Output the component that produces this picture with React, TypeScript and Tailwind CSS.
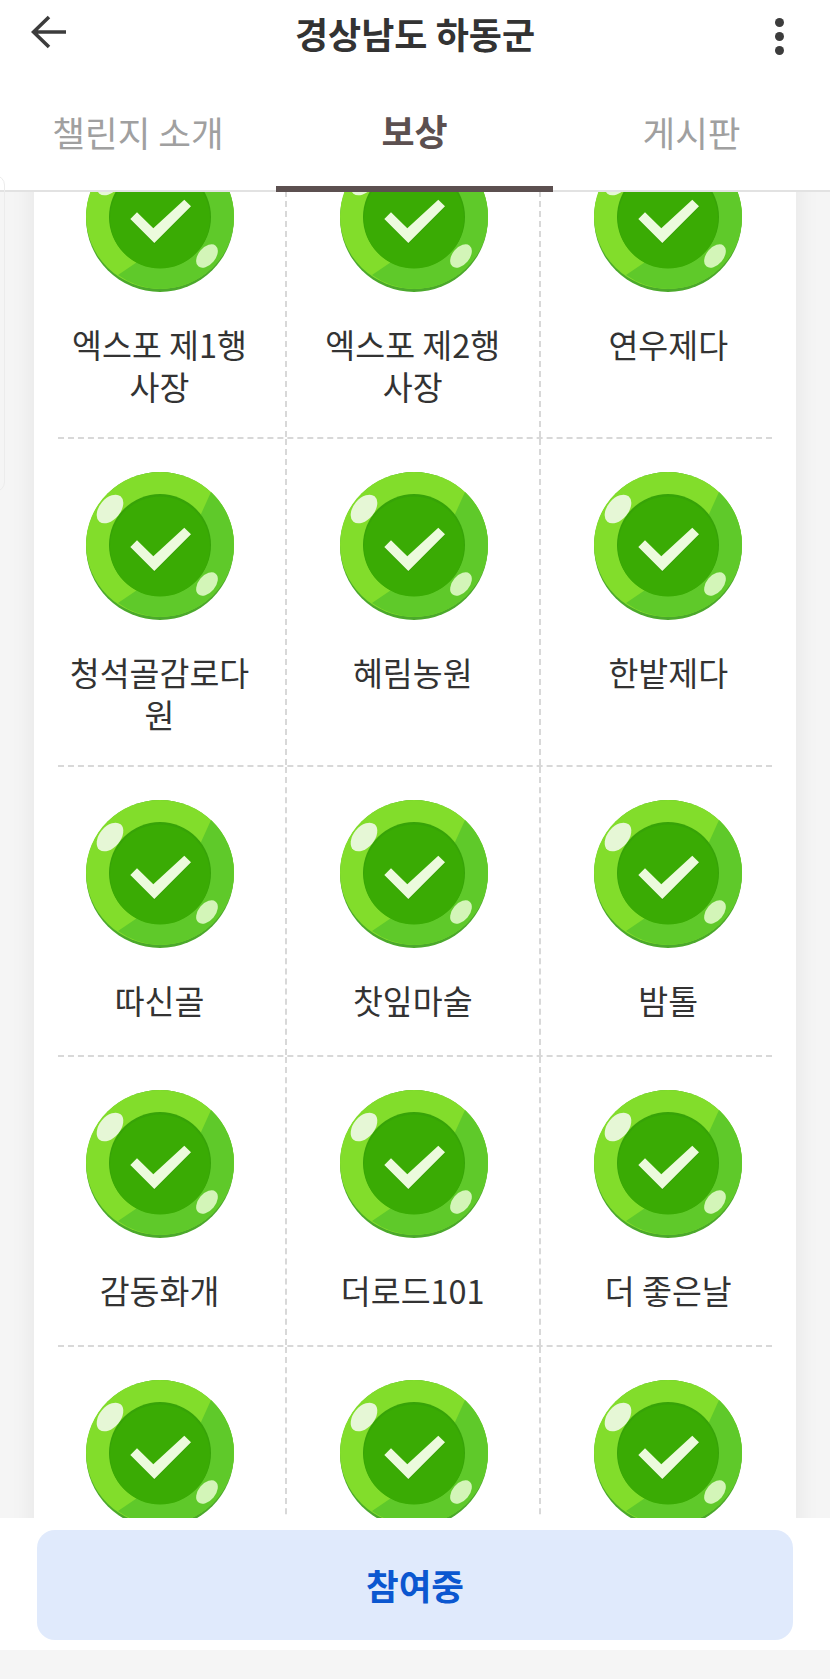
import {FC} from "react";

const rows: string[][] = [
  ["엑스포 제1행 사장", "엑스포 제2행 사장", "연우제다"],
  ["청석골감로다원", "혜림농원", "한밭제다"],
  ["따신골", "찻잎마술", "밤톨"],
  ["감동화개", "더로드101", "더 좋은날"],
  ["", "", ""],
];

const coinOffsets = ["ml-[1px]", "ml-[2px]", "-ml-[1px]"];

const CheckCoin: FC<{className: string}> = ({className}) => (
  <svg width="148" height="148" viewBox="0 0 148 148" className={`block ${className}`}>
    <circle cx="74" cy="74" r="74" fill="#4ba92b"/>
    <ellipse cx="74" cy="72.5" rx="74" ry="72.5" fill="#82dd2b"/>
    <path d="M125 20 L106 62 L60 112 L32 131 A74 72.5 0 0 0 74 145 A74 72.5 0 0 0 148 72.5 A74 72.5 0 0 0 125 20 Z" fill="#5fc92a"/>
    <circle cx="74" cy="73" r="51" fill="#37a308"/>
    <circle cx="74" cy="74.5" r="50" fill="#3aab04"/>
    <ellipse cx="24" cy="37" rx="16.5" ry="10.5" transform="rotate(-50 24 37)" fill="#e6f7d6"/>
    <ellipse cx="121" cy="112" rx="13.5" ry="8.5" transform="rotate(-50 121 112)" fill="#d3f5b8"/>
    <polygon points="51,69.3 67.3,85.3 98.3,56.7 105,63.3 68.3,100 44.3,76" fill="#2f9405" opacity="0.5"/>
    <polygon points="51,68.3 67.3,84.3 98.3,55.7 105,62.3 68.3,99 44.3,75" fill="#ecfbdd"/>
  </svg>
);

const Cell: FC<{label: string; index: number}> = ({label, index}) => (
  <div className={`flex flex-col items-center pt-[33px] pb-[30px] min-h-[288px] ${index === 2 ? "" : "border-r-2 border-dashed border-[#d8d8d8]"}`}>
    <CheckCoin className={coinOffsets[index]}/>
    {label && (
      <p className="mt-[31px] w-[200px] text-center text-[32.5px] leading-[42px] text-[#333333]">{label}</p>
    )}
  </div>
);

export default function App() {
  return (
    <div className="relative flex flex-col h-[1679px] overflow-hidden bg-[#f5f5f5] font-['Noto_Sans_CJK_KR',sans-serif]">
      <header className="relative z-10 bg-white">
        <div className="grid grid-cols-[1fr_auto_1fr] items-center h-[66px] px-[31px]">
          <svg width="36" height="34" viewBox="0 0 36 34" fill="none" stroke="#3c3c3c" strokeWidth="3.6" className="-mt-[2px]">
            <path d="M35 17 H3 M18 2 L2.5 17 L18 32"/>
          </svg>
          <h1 className="text-[36px] font-bold text-[#333333] leading-none">경상남도 하동군</h1>
          <div className="flex flex-col gap-[5px] justify-self-end mr-[15px] mt-[6px]">
            <span className="w-[9px] h-[9px] rounded-full bg-[#3c3c3c]"/>
            <span className="w-[9px] h-[9px] rounded-full bg-[#3c3c3c]"/>
            <span className="w-[9px] h-[9px] rounded-full bg-[#3c3c3c]"/>
          </div>
        </div>
        <nav className="grid grid-cols-[276px_277px_1fr] h-[126px] border-b-2 border-[#e2e2e2]">
          <div className="flex items-center justify-center pt-[8px] text-[35.5px] text-[#a0a0a0]">챌린지 소개</div>
          <div className="flex items-center justify-center pt-[8px] -mb-[2px] border-b-[6px] border-[#5c5050] text-[36px] font-bold text-[#5c5050]">보상</div>
          <div className="flex items-center justify-center pt-[8px] text-[35.5px] text-[#a0a0a0]">게시판</div>
        </nav>
      </header>

      <div className="absolute -left-[10px] top-[175px] w-[15px] h-[317px] rounded-r-[10px] border border-[#ececec] z-20"/>

      <main className="flex-1 min-h-0 overflow-hidden">
        <div className="mx-[34px] -mt-[81px] bg-white shadow-[0_0_24px_rgba(0,0,0,0.07)]">
          {rows.map((row, i) => (
            <div key={i}>
              <div className="grid grid-cols-[253px_253.5px_1fr]">
                {row.map((label, j) => (
                  <Cell key={j} label={label} index={j}/>
                ))}
              </div>
              {i < rows.length - 1 && <div className="mx-[24px] border-t-2 border-dashed border-[#d8d8d8]"/>}
            </div>
          ))}
        </div>
      </main>

      <footer className="relative z-10 bg-white h-[132px] mb-[29px] px-[37px] pt-[12px]">
        <button className="w-full h-[110px] rounded-[18px] bg-[#e0eafc] text-[35.5px] font-bold text-[#0b57d0]">참여중</button>
      </footer>
    </div>
  );
}
